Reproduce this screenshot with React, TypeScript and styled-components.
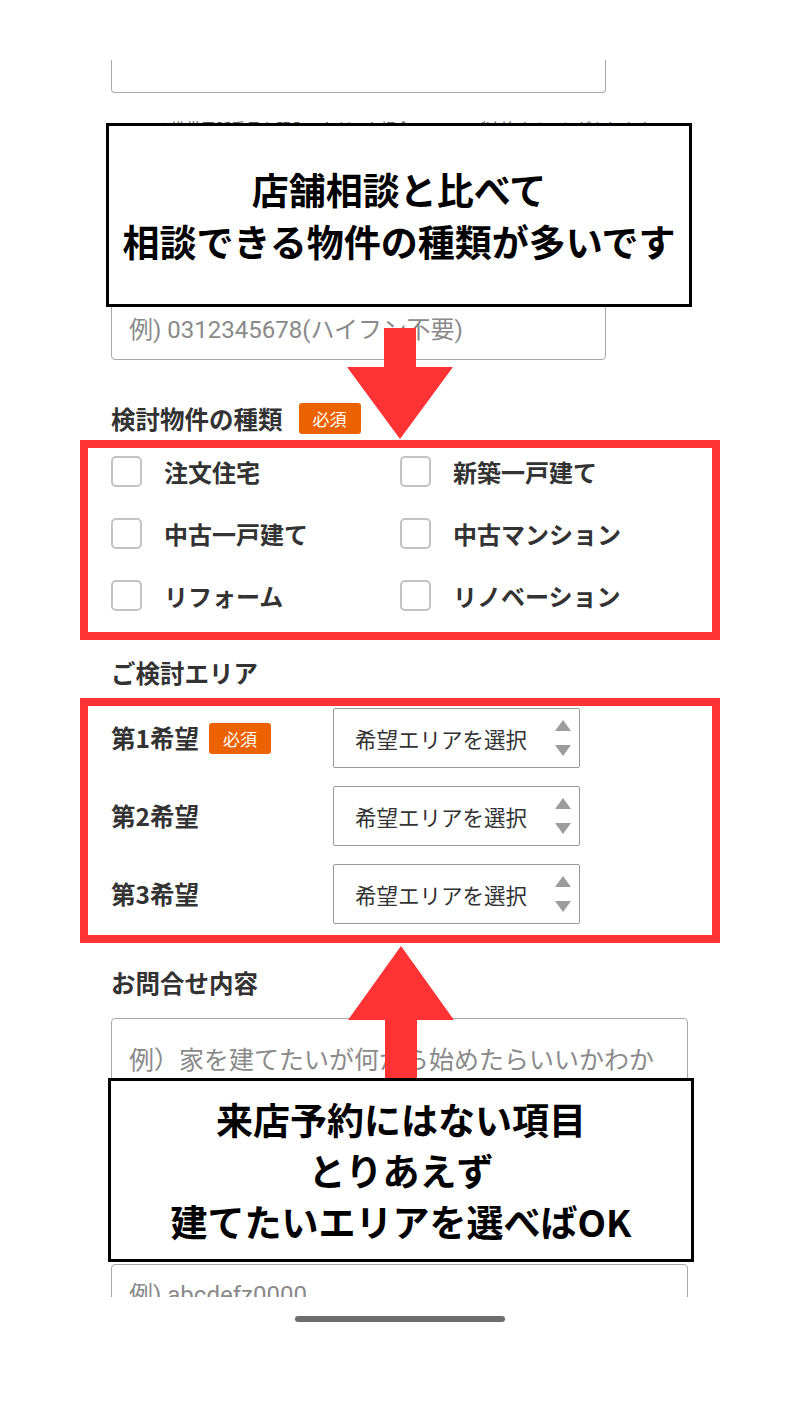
import React from "react";
import styled, { createGlobalStyle } from "styled-components";

const GlobalStyle = createGlobalStyle`
  html, body {
    margin: 0;
    padding: 0;
    background: #ffffff;
  }
  body {
    font-family: "Noto Sans CJK JP", "Noto Sans", sans-serif;
    color: #333333;
  }
  * { box-sizing: border-box; }
`;

const RED = "#ff3333";

const Page = styled.div`
  position: relative;
  width: 800px;
  height: 1422px;
  overflow: hidden;
  background: #ffffff;
`;

const StatusBar = styled.div`
  height: 60px;
  background: #ffffff;
`;

const Screen = styled.div`
  height: 1237px;
  overflow: hidden;
`;

const Form = styled.div`
  display: flex;
  flex-direction: column;
  padding-left: 111px;
`;

const InputBox = styled.div<{ $width: number; $height: number; $mt: number; $cut?: boolean }>`
  width: ${(p) => p.$width}px;
  height: ${(p) => p.$height}px;
  margin-top: ${(p) => p.$mt}px;
  border: 1px solid #a9a9a9;
  border-top: ${(p) => (p.$cut ? "none" : "1px solid #a9a9a9")};
  border-radius: ${(p) => (p.$cut ? "0 0 4px 4px" : "4px")};
  background: #ffffff;
  display: flex;
  align-items: flex-end;
  padding: 0 0 0 17px;
  flex-shrink: 0;
`;

const Placeholder = styled.span<{ $size: number }>`
  font-family: "Roboto", "Noto Sans CJK JP", sans-serif;
  font-size: ${(p) => p.$size}px;
  line-height: 58px;
  color: #8a8a8a;
  white-space: nowrap;
`;

const TextArea = styled.div`
  width: 577px;
  height: 150px;
  margin-top: 22px;
  border: 1px solid #a9a9a9;
  border-radius: 4px;
  padding: 24px 0 0 17px;
  flex-shrink: 0;
`;

const AreaPlaceholder = styled.span`
  font-family: "Noto Sans CJK JP", sans-serif;
  font-size: 25px;
  line-height: 30px;
  color: #8a8a8a;
  white-space: nowrap;
`;

const Note = styled.p`
  margin: 25px 0 0;
  font-size: 15px;
  line-height: 20px;
  color: #555555;
  white-space: nowrap;
`;

const LabelRow = styled.div<{ $mt: number }>`
  display: flex;
  align-items: center;
  gap: 16px;
  height: 31px;
  margin-top: ${(p) => p.$mt}px;
`;

const SectionLabel = styled.span`
  font-size: 24.5px;
  font-weight: 700;
  line-height: 26px;
  color: #333333;
  white-space: nowrap;
`;

const SectionTitle = styled.div<{ $mt: number }>`
  margin-top: ${(p) => p.$mt}px;
  font-size: 24.5px;
  font-weight: 700;
  line-height: 26px;
  color: #333333;
`;

const Badge = styled.span`
  display: inline-flex;
  align-items: center;
  justify-content: center;
  height: 31px;
  padding: 0 14px;
  border-radius: 3px;
  background: #ec6200;
  color: #ffffff;
  font-size: 17px;
  font-weight: 400;
  line-height: 1;
`;

const RedFrame = styled.div<{ $mt: number; $pt: number; $pb: number }>`
  width: 640px;
  margin-left: -31px;
  margin-top: ${(p) => p.$mt}px;
  border: 8px solid ${RED};
  padding: ${(p) => p.$pt}px 23px ${(p) => p.$pb}px;
  background: #ffffff;
`;

const CheckGrid = styled.div`
  display: grid;
  grid-template-columns: 289px 289px;
  grid-auto-rows: 46px;
  row-gap: 16px;
`;

const CheckItem = styled.label`
  display: flex;
  align-items: center;
  gap: 22px;
`;

const CheckBox = styled.span`
  width: 31px;
  height: 31px;
  border: 2px solid #c3c3c3;
  border-radius: 5px;
  background: #ffffff;
  flex-shrink: 0;
`;

const CheckText = styled.span`
  font-size: 24px;
  font-weight: 700;
  color: #333333;
  white-space: nowrap;
`;

const AreaRows = styled.div`
  display: flex;
  flex-direction: column;
  gap: 18px;
`;

const AreaRow = styled.div`
  display: grid;
  grid-template-columns: 222px 247px;
  align-items: center;
  height: 60px;
`;

const AreaLabel = styled.div`
  display: flex;
  align-items: center;
  gap: 10px;
`;

const SelectBox = styled.div`
  display: flex;
  align-items: center;
  justify-content: space-between;
  height: 60px;
  border: 1.5px solid #9a9a9a;
  border-radius: 2px;
  padding: 0 8px 0 21px;
  background: #ffffff;
`;

const SelectText = styled.span`
  font-size: 21.5px;
  color: #333333;
  white-space: nowrap;
`;

const Spinner = styled.svg`
  width: 16px;
  height: 36px;
  flex-shrink: 0;
`;

const Callout = styled.div<{ $top: number; $left: number; $lh: number }>`
  position: absolute;
  top: ${(p) => p.$top}px;
  left: ${(p) => p.$left}px;
  width: 586px;
  height: 184px;
  border: 3px solid #000000;
  background: #ffffff;
  display: flex;
  flex-direction: column;
  align-items: center;
  justify-content: center;
  font-size: 37px;
  font-weight: 700;
  line-height: ${(p) => p.$lh}px;
  color: #000000;
  text-align: center;
  z-index: 3;
`;

const Arrow = styled.svg<{ $top: number; $left: number }>`
  position: absolute;
  top: ${(p) => p.$top}px;
  left: ${(p) => p.$left}px;
  z-index: 2;
`;

const NavBar = styled.div`
  height: 125px;
  display: flex;
  justify-content: center;
  padding-top: 19px;
`;

const HomeIndicator = styled.div`
  width: 210px;
  height: 6px;
  border-radius: 3px;
  background: #6d6d6d;
`;

const SelectArrows = () => (
  <Spinner viewBox="0 0 16 36">
    <polygon points="8,0 16,11 0,11" fill="#9c9c9c" />
    <polygon points="0,25 16,25 8,36" fill="#9c9c9c" />
  </Spinner>
);

const types = ["注文住宅", "新築一戸建て", "中古一戸建て", "中古マンション", "リフォーム", "リノベーション"];
const areas = ["第1希望", "第2希望", "第3希望"];

export default function App() {
  return (
    <>
      <GlobalStyle />
      <Page>
        <StatusBar />
        <Screen>
          <Form>
            <InputBox $width={495} $height={33} $mt={0} $cut />
            <Note>　　　※携帯電話番号を記入いただいた場合、SMSでご連絡することがあります</Note>
            <LabelRow $mt={99}>
              <SectionLabel>電話番号</SectionLabel>
              <Badge>必須</Badge>
            </LabelRow>
            <InputBox $width={495} $height={61} $mt={31}>
              <Placeholder $size={24}>例) 0312345678(ハイフン不要)</Placeholder>
            </InputBox>
            <LabelRow $mt={43}>
              <SectionLabel>検討物件の種類</SectionLabel>
              <Badge>必須</Badge>
            </LabelRow>
            <RedFrame $mt={6} $pt={0} $pb={14}>
              <CheckGrid>
                {types.map((t) => (
                  <CheckItem key={t}>
                    <CheckBox />
                    <CheckText>{t}</CheckText>
                  </CheckItem>
                ))}
              </CheckGrid>
            </RedFrame>
            <SectionTitle $mt={20}>ご検討エリア</SectionTitle>
            <RedFrame $mt={12} $pt={2} $pb={11}>
              <AreaRows>
                {areas.map((a, i) => (
                  <AreaRow key={a}>
                    <AreaLabel>
                      <SectionLabel>{a}</SectionLabel>
                      {i === 0 && <Badge>必須</Badge>}
                    </AreaLabel>
                    <SelectBox>
                      <SelectText>希望エリアを選択</SelectText>
                      <SelectArrows />
                    </SelectBox>
                  </AreaRow>
                ))}
              </AreaRows>
            </RedFrame>
            <SectionTitle $mt={27}>お問合せ内容</SectionTitle>
            <TextArea>
              <AreaPlaceholder>例）家を建てたいが何から始めたらいいかわか</AreaPlaceholder>
            </TextArea>
            <SectionTitle $mt={22}>LINE ID</SectionTitle>
            <InputBox $width={577} $height={61} $mt={48}>
              <Placeholder $size={24}>例) abcdefz0000</Placeholder>
            </InputBox>
          </Form>
        </Screen>
        <NavBar>
          <HomeIndicator />
        </NavBar>

        <Callout $top={123} $left={106} $lh={52}>
          <span>店舗相談と比べて</span>
          <span>相談できる物件の種類が多いです</span>
        </Callout>
        <Arrow $top={328} $left={347} width={106} height={112} viewBox="0 0 106 112">
          <path d="M37 0 H69 V39 H106 L53 111 L0 39 H37 Z" fill={RED} />
        </Arrow>
        <Arrow $top={946} $left={348} width={106} height={134} viewBox="0 0 106 134">
          <path d="M53 0 L106 74 H69 V134 H37 V74 H0 Z" fill={RED} />
        </Arrow>
        <Callout $top={1078} $left={108} $lh={51}>
          <span>来店予約にはない項目</span>
          <span>とりあえず</span>
          <span>建てたいエリアを選べばOK</span>
        </Callout>
      </Page>
    </>
  );
}
